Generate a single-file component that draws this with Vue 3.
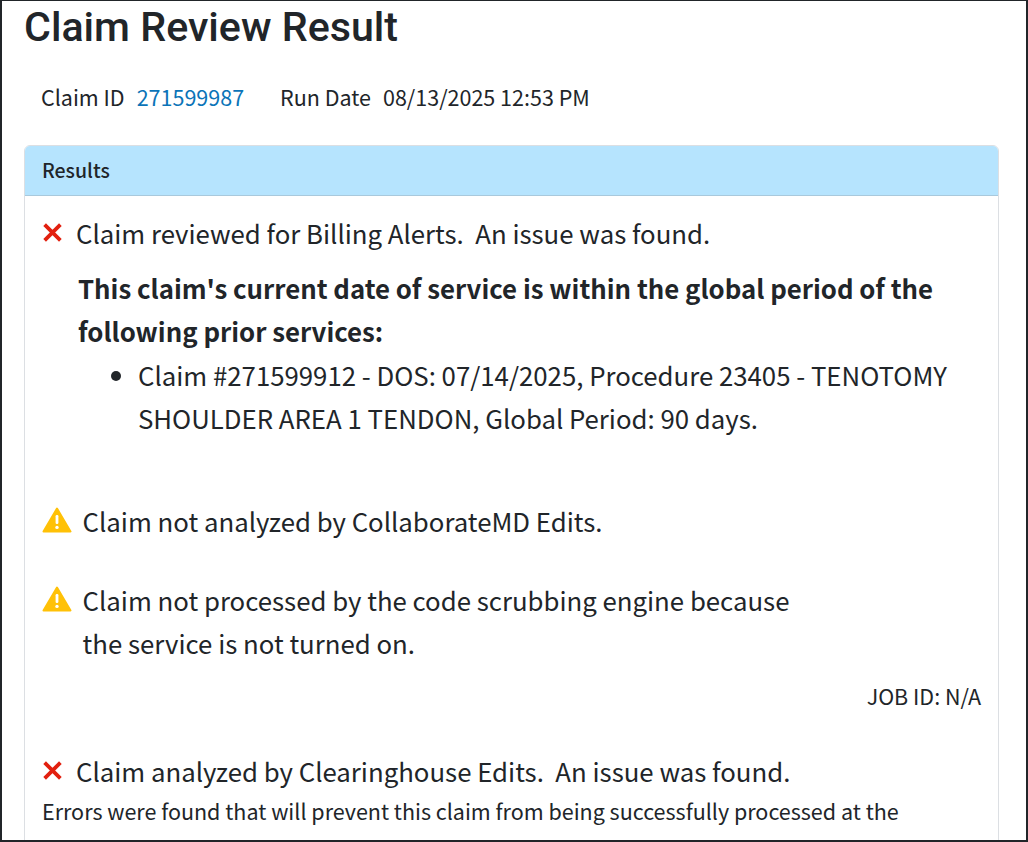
<script setup>
const meta = { claimId: '271599987', runDate: '08/13/2025 12:53 PM' }
</script>

<template>
  <div class="frame">
    <h1 class="title">Claim Review Result</h1>
    <div class="meta">
      <span>Claim ID</span>
      <a class="claim-link">{{ meta.claimId }}</a>
      <span class="run-label">Run Date</span>
      <span>{{ meta.runDate }}</span>
    </div>
    <section class="card">
      <div class="card-head">Results</div>
      <div class="card-body">
        <div class="status first">
          <svg class="x-icon" viewBox="0 0 20 20"><path d="M2.5 2.5L17.5 17.5M17.5 2.5L2.5 17.5" /></svg>
          <span>Claim reviewed for Billing Alerts.&nbsp; An issue was found.</span>
        </div>
        <div class="alert-detail">
          <strong>This claim's current date of service is within the global period of the following prior services:</strong>
          <ul>
            <li>Claim #271599912 - DOS: 07/14/2025, Procedure 23405 - TENOTOMY SHOULDER AREA 1 TENDON, Global Period: 90 days.</li>
          </ul>
        </div>
        <div class="status warn-one">
          <svg class="warn-icon" viewBox="0 0 30 26"><path class="tri" d="M15 1.5L28.5 24.5H1.5Z" /><rect class="mark" x="13.6" y="8" width="2.8" height="9" rx="1.2" /><circle class="mark" cx="15" cy="20.4" r="1.7" /></svg>
          <span>Claim not analyzed by CollaborateMD Edits.</span>
        </div>
        <div class="status warn-two">
          <svg class="warn-icon" viewBox="0 0 30 26"><path class="tri" d="M15 1.5L28.5 24.5H1.5Z" /><rect class="mark" x="13.6" y="8" width="2.8" height="9" rx="1.2" /><circle class="mark" cx="15" cy="20.4" r="1.7" /></svg>
          <span>Claim not processed by the code scrubbing engine because<br />the service is not turned on.</span>
        </div>
        <div class="job-id">JOB ID: N/A</div>
        <div class="status last">
          <svg class="x-icon" viewBox="0 0 20 20"><path d="M2.5 2.5L17.5 17.5M17.5 2.5L2.5 17.5" /></svg>
          <span>Claim analyzed by Clearinghouse Edits.&nbsp; An issue was found.</span>
        </div>
        <p class="errors">Errors were found that will prevent this claim from being successfully processed at the</p>
      </div>
    </section>
  </div>
</template>

<style>
html, body {
  margin: 0;
  overflow: hidden;
}
</style>

<style scoped>
.frame {
  box-sizing: border-box;
  width: 1028px;
  height: 842px;
  overflow: hidden;
  background: #fff;
  border: 2px solid #212529;
  border-top-width: 1px;
  padding: 0 27px 0 22px;
  color: #212529;
  font-family: "Noto Sans CJK JP", "Noto Sans", sans-serif;
}
.title {
  margin: 0;
  padding-top: 2px;
  font-family: Roboto, sans-serif;
  font-size: 41.2px;
  font-weight: 500;
  line-height: 48px;
}
.meta {
  display: flex;
  align-items: center;
  gap: 12px;
  margin-top: 24px;
  padding-left: 17px;
  font-size: 21.5px;
  line-height: 44px;
}
.claim-link {
  color: #0b74b8;
}
.run-label {
  margin-left: 24px;
}
.card {
  margin-top: 26px;
  height: 760px;
  border: 1px solid #dcdfe3;
  border-radius: 6px 6px 0 0;
}
.card-head {
  box-sizing: border-box;
  height: 50px;
  padding-left: 17px;
  background: #b6e4fe;
  border-bottom: 1px solid #a9c9dc;
  border-radius: 5px 5px 0 0;
  font-size: 19.5px;
  font-weight: 500;
  line-height: 47px;
}
.card-body {
  padding: 0 17px;
  font-size: 25.78px;
  line-height: 43.5px;
}
.status {
  display: flex;
  align-items: flex-start;
  gap: 13px;
}
.first {
  margin-top: 15px;
}
.x-icon {
  flex: none;
  width: 21px;
  height: 21px;
  margin-top: 11px;
  fill: none;
  stroke: #e2200f;
  stroke-width: 3.6;
}
.warn-icon {
  flex: none;
  width: 30px;
  height: 26px;
  margin-top: 8px;
  margin-right: -2.4px;
}
.tri {
  fill: #ffc107;
  stroke: #ffc107;
  stroke-width: 2;
  stroke-linejoin: round;
}
.mark {
  fill: #fff;
}
.alert-detail {
  margin: 11px 0 0 36px;
}
.alert-detail ul {
  margin: 0;
  padding-left: 60px;
}
.warn-one {
  margin-top: 59px;
}
.warn-two {
  margin-top: 35.5px;
}
.job-id {
  margin-top: 9.5px;
  text-align: right;
  font-size: 21.5px;
  line-height: 44px;
}
.last {
  margin-top: 31px;
}
.errors {
  margin: 0;
  font-size: 21.5px;
  line-height: 36px;
}
</style>
